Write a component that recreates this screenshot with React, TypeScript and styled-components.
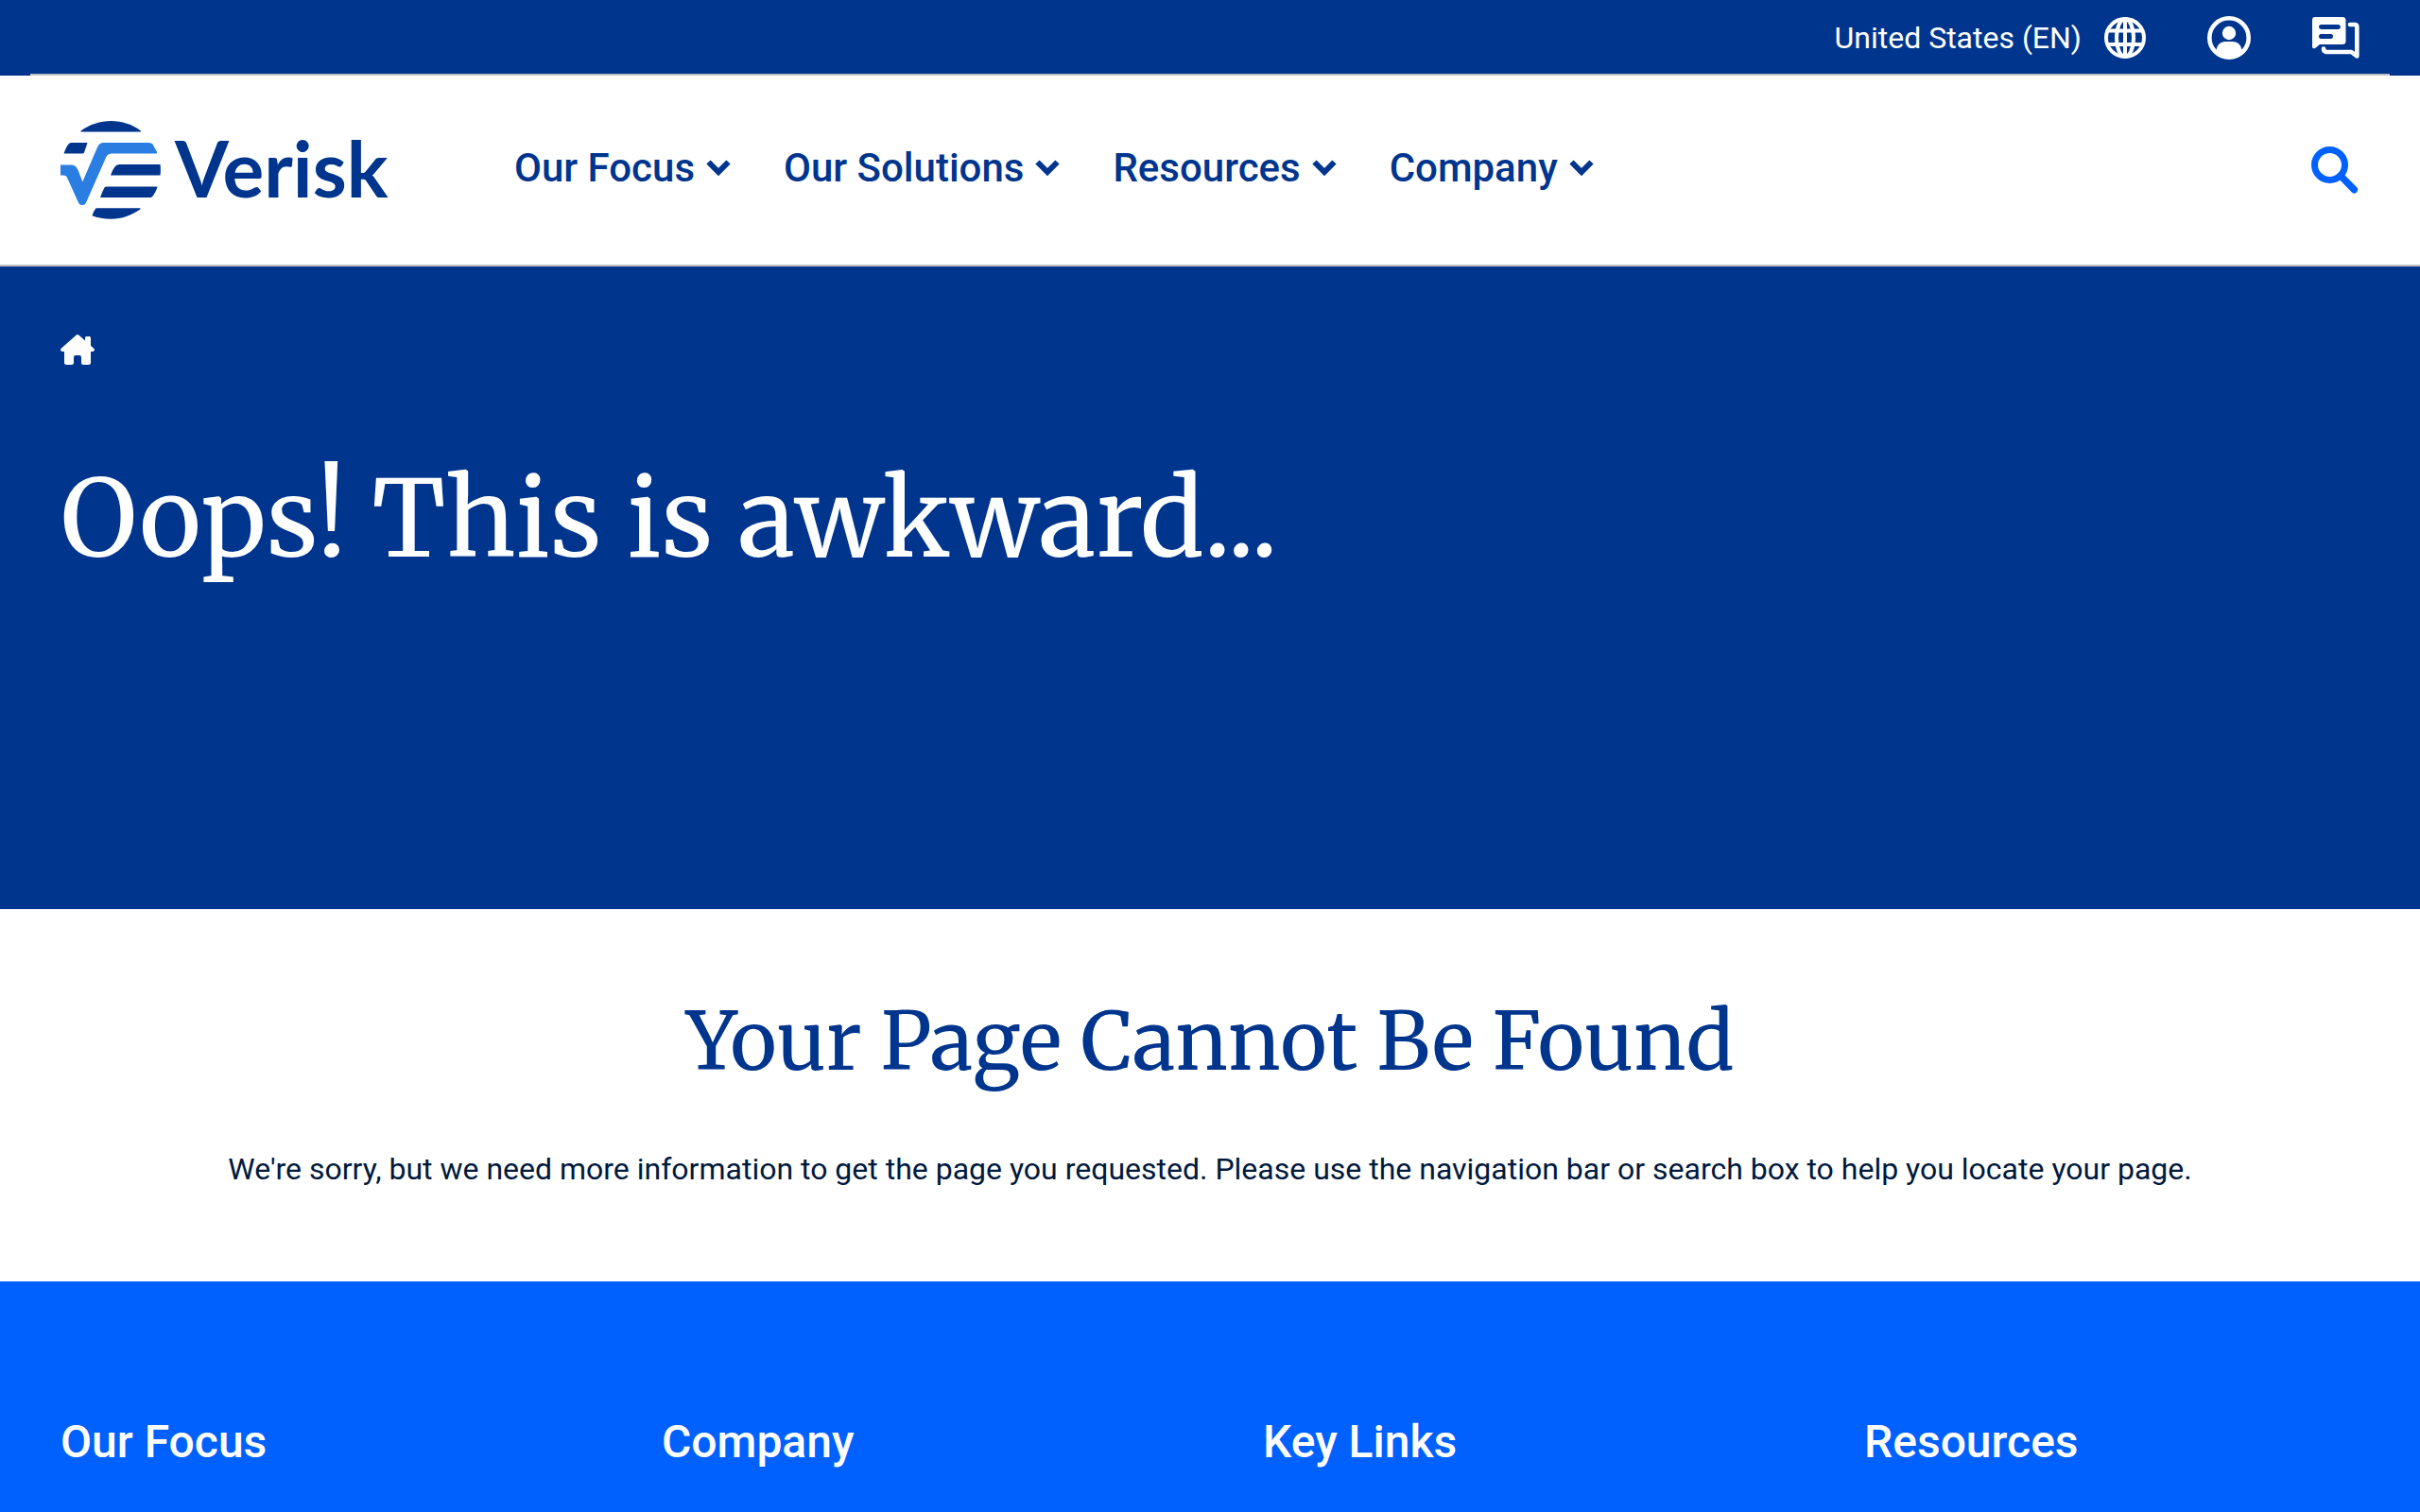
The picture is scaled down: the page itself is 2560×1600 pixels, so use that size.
import React from "react";
import styled, { createGlobalStyle } from "styled-components";

const navy = "#00358e";
const serif = `"Merriweather", "DejaVu Serif Condensed", "DejaVu Serif", serif`;

const GlobalStyle = createGlobalStyle`
  *, *::before, *::after { box-sizing: border-box; }
  body { margin: 0; background: #fff; font-family: Roboto, "Liberation Sans", sans-serif; }
  h1, h2, h3, p, ul { margin: 0; padding: 0; }
  svg { display: block; }
`;

const Page = styled.div`
  min-height: 100vh;
  display: flex;
  flex-direction: column;
`;

const UtilityBar = styled.div`
  background: ${navy};
  padding: 0 32px;
`;

const UtilityInner = styled.div`
  height: 80px;
  padding: 2px 32px 0;
  border-bottom: 2px solid #c1bfbf;
  display: flex;
  align-items: center;
  justify-content: flex-end;
  gap: 65px;
`;

const UtilityButton = styled.button`
  display: flex;
  align-items: center;
  gap: 24px;
  padding: 0;
  border: 0;
  background: none;
  color: #fff;
  font: 400 32px/40px Roboto, sans-serif;
  cursor: pointer;
`;

const Header = styled.header`
  height: 202px;
  padding: 0 64px;
  border-bottom: 2px solid #c1bfbf;
  display: flex;
  align-items: center;
  gap: 130px;
`;

const LogoLink = styled.a`
  display: block;
`;

const Nav = styled.nav`
  flex: 1;
`;

const NavList = styled.ul`
  list-style: none;
  display: flex;
  gap: 56px;
`;

const NavButton = styled.button`
  display: flex;
  align-items: center;
  gap: 12px;
  padding: 0 0 4px;
  border: 0;
  background: none;
  color: ${navy};
  font: 500 42px/48px Roboto, sans-serif;
  cursor: pointer;
`;

const SearchButton = styled.button`
  padding: 0;
  border: 0;
  background: none;
  color: #0061ff;
  cursor: pointer;
`;

const Hero = styled.section`
  min-height: 680px;
  padding: 72px 64px;
  background: ${navy};
  color: #fff;
`;

const HomeLink = styled.a`
  display: block;
  width: fit-content;
  color: #fff;
`;

const HeroTitle = styled.h1`
  margin-top: 92px;
  font: 400 112px/144px ${serif};
`;

const Message = styled.main`
  padding: 84px 64px 92px;
  text-align: center;
`;

const MessageTitle = styled.h2`
  color: ${navy};
  font: 400 84px/112px ${serif};
`;

const MessageText = styled.p`
  margin-top: 52px;
  color: #00193d;
  font-size: 32px;
  line-height: 54px;
`;

const Footer = styled.footer`
  flex: 1;
  padding: 140px 64px 0;
  background: #0061ff;
  color: #fff;
`;

const FooterColumns = styled.div`
  display: grid;
  grid-template-columns: repeat(4, 1fr);
  gap: 112px;
`;

const FooterTitle = styled.h3`
  font: 500 48px/60px Roboto, sans-serif;
`;

const Wordmark = styled.text`
  font: 700 82px Lato, sans-serif;
  fill: ${navy};
`;

const Logo = () => (
  <svg width="350" height="104" viewBox="0 0 350 104" role="img" aria-label="Verisk">
    <g fill={navy}>
      <path d="M21.5 10.5C31 3.500 42 0 53.500 0S76 3.500 85 10.500q.6 1-.6 1H22q-1.300 0-.5-1Z" />
      <path d="M11.500 23H28.500L25 33.500q-.5 1-1.500 1H3.500C5 30 7 26 9 24q1-1 2.500-1Z" />
      <path d="M62 46H105.500C106 50 106 54 105.500 57.500H53Q55 51.500 57.500 48.500 59 46 62 46Z" />
      <path d="M49 69.500H102.500C101.500 73.500 99.500 77 97.500 79.500 96.700 80.700 95.500 81 94.500 81H42Q44 75 46.500 70.500 47 69.500 49 69.500Z" />
      <path d="M38 92.300H84q1 .3.300 1.200C75 100 65 103.700 53.500 103.700 46 103.700 39 102.300 33.500 100.200Q34.500 96 37 93 37.300 92.300 38 92.300Z" />
    </g>
    <path
      d="M0 46.500H9C15 46 17 48 19 53L23.300 64.500 38.500 29C40.500 24.500 42.500 23 46 23H93C96 23 97.200 23.800 98.300 26L102.200 33.200q.3 1.300-1 1.300H55C51 34.500 49 36 47.500 40L27 86.500Q26 89 23 89T19 86.500L7.500 61C6.500 58.500 5.500 57.500 3 57.500H0Z"
      fill="#2a7de1"
    />
    <Wordmark x="121" y="81">Verisk</Wordmark>
  </svg>
);

const Chevron = () => (
  <svg width="26" height="18" viewBox="0 0 26 18" fill="none" aria-hidden="true">
    <path d="M2.500 2.500 13 13 23.500 2.500" stroke="currentColor" strokeWidth="6" />
  </svg>
);

const GlobeIcon = () => (
  <svg width="44" height="44" viewBox="1 1 44 44" fill="none" stroke="#fff" strokeWidth="4" aria-hidden="true">
    <circle cx="23" cy="23" r="20" />
    <ellipse cx="23" cy="23" rx="9" ry="20" />
    <path d="M23 3v40M5 15.500h36M5 30h36" />
  </svg>
);

const UserIcon = () => (
  <svg width="46" height="46" viewBox="0 0 46 46" aria-hidden="true">
    <circle cx="23" cy="23" r="20.700" fill="none" stroke="#fff" strokeWidth="4.600" />
    <circle cx="23" cy="18" r="7.200" fill="#fff" />
    <path d="M9.500 37.500C9.500 31 14 27 19 27h8c5 0 9.500 4 9.500 10.500C33 42 28 44 23 44S13 42 9.500 37.500Z" fill="#fff" />
  </svg>
);

const ChatIcon = () => (
  <svg width="50" height="46" viewBox="0 0 50 46" aria-hidden="true">
    <path
      fill="#fff"
      fillRule="evenodd"
      d="M3 1H32Q35.500 1 35.500 4.500V26.500Q35.500 30 32 30H8L3.500 33.700Q0 35.500 0 32V4Q0 1 3 1ZM9.500 9a2.500 2.500 0 0 0 0 5H27.500a2.500 2.500 0 0 0 0-5ZM9.500 19a2.500 2.500 0 0 0 0 5H19.500a2.500 2.500 0 0 0 0-5Z"
    />
    <path
      d="M40 9H45Q47.300 9 47.300 11.500V42.500L41.500 38H15Q12 37.500 12 34.500"
      fill="none"
      stroke="#fff"
      strokeWidth="4.600"
      strokeLinecap="round"
      strokeLinejoin="round"
    />
  </svg>
);

const SearchIcon = () => (
  <svg width="51" height="50" viewBox="0 0 51 50" fill="none" stroke="currentColor" aria-hidden="true">
    <circle cx="19.500" cy="19.500" r="16" strokeWidth="7" />
    <path d="M31 31 45.300 45.700" strokeWidth="7.500" strokeLinecap="round" />
  </svg>
);

const HomeIcon = () => (
  <svg width="36" height="32" viewBox="0 0 36 32" fill="currentColor" aria-hidden="true">
    <path d="M16.500.8Q18 -.6 19.500.8L26 6.500V3.500Q26 2 27.500 2H30.500Q32 2 32 3.500V11.700L35.300 14.700Q36.500 16 35.500 17.300 35 18 34 18H32V29.500Q32 32 29.500 32H24.500Q22 32 22 29.500V24Q22 22 20 22H16Q14 22 14 24V29.500Q14 32 11.500 32H6.500Q4 32 4 29.500V18H2Q1 18 .5 17.300-.5 16 .7 14.700Z" />
  </svg>
);

const navItems = ["Our Focus", "Our Solutions", "Resources", "Company"];
const footerItems = ["Our Focus", "Company", "Key Links", "Resources"];

export default function App() {
  return (
    <>
      <GlobalStyle />
      <Page>
        <UtilityBar>
          <UtilityInner>
            <UtilityButton type="button">
              United States (EN)
              <GlobeIcon />
            </UtilityButton>
            <UtilityButton type="button" aria-label="Account">
              <UserIcon />
            </UtilityButton>
            <UtilityButton type="button" aria-label="Contact us">
              <ChatIcon />
            </UtilityButton>
          </UtilityInner>
        </UtilityBar>
        <Header>
          <LogoLink href="#">
            <Logo />
          </LogoLink>
          <Nav aria-label="Main">
            <NavList>
              {navItems.map((item) => (
                <li key={item}>
                  <NavButton type="button">
                    {item}
                    <Chevron />
                  </NavButton>
                </li>
              ))}
            </NavList>
          </Nav>
          <SearchButton type="button" aria-label="Search">
            <SearchIcon />
          </SearchButton>
        </Header>
        <Hero>
          <HomeLink href="#" aria-label="Home">
            <HomeIcon />
          </HomeLink>
          <HeroTitle>Oops! This is awkward...</HeroTitle>
        </Hero>
        <Message>
          <MessageTitle>Your Page Cannot Be Found</MessageTitle>
          <MessageText>
            We're sorry, but we need more information to get the page you requested. Please use the
            navigation bar or search box to help you locate your page.
          </MessageText>
        </Message>
        <Footer>
          <FooterColumns>
            {footerItems.map((item) => (
              <FooterTitle key={item}>{item}</FooterTitle>
            ))}
          </FooterColumns>
        </Footer>
      </Page>
    </>
  );
}
